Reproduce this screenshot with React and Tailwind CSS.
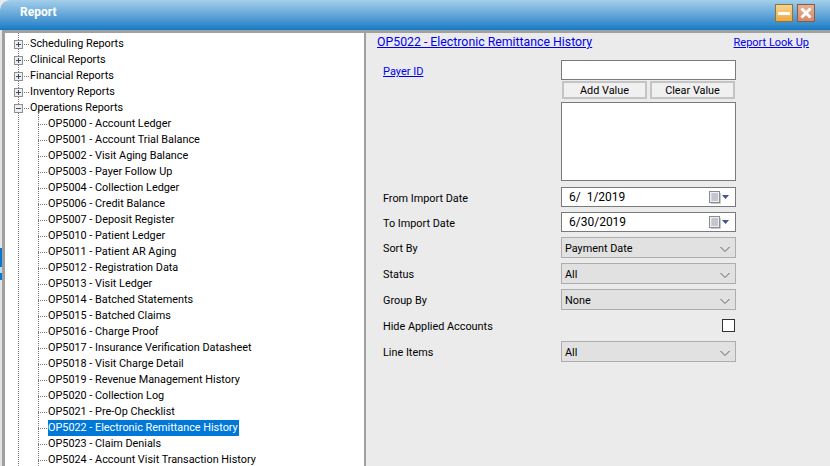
import React from "react";

const reports = [
    "OP5000 - Account Ledger",
    "OP5001 - Account Trial Balance",
    "OP5002 - Visit Aging Balance",
    "OP5003 - Payer Follow Up",
    "OP5004 - Collection Ledger",
    "OP5006 - Credit Balance",
    "OP5007 - Deposit Register",
    "OP5010 - Patient Ledger",
    "OP5011 - Patient AR Aging",
    "OP5012 - Registration Data",
    "OP5013 - Visit Ledger",
    "OP5014 - Batched Statements",
    "OP5015 - Batched Claims",
    "OP5016 - Charge Proof",
    "OP5017 - Insurance Verification Datasheet",
    "OP5018 - Visit Charge Detail",
    "OP5019 - Revenue Management History",
    "OP5020 - Collection Log",
    "OP5021 - Pre-Op Checklist",
    "OP5022 - Electronic Remittance History",
    "OP5023 - Claim Denials",
    "OP5024 - Account Visit Transaction History",
];

const Expander = ({ open }) => (
    <svg width="9" height="9" viewBox="0 0 9 9" className="shrink-0">
        <rect x="0.5" y="0.5" width="8" height="8" fill="#eeeeee" stroke="#8f8f8f" />
        <path d={open ? "M2 4.5H7" : "M2 4.5H7M4.5 2V7"} stroke="#3c4a6a" fill="none" />
    </svg>
);

const GroupRow = ({ label, open }) => (
    <div className="flex h-4 items-center pl-[14px]">
        <Expander open={open} />
        <div className="ml-[1px] w-[5px] border-t border-dotted border-[#777]" />
        <span className="ml-[1px]">{label}</span>
    </div>
);

const ReportRow = ({ label, selected }) => (
    <div className="flex h-4 items-center pl-[38px]">
        <div className="w-[9px] border-t border-dotted border-[#777]" />
        <span className={selected ? "ml-[1px] bg-[#0078d7] pr-[1px] text-white" : "ml-[1px]"}>{label}</span>
    </div>
);

const FieldRow = ({ label, className, labelClass = "mt-[2px]", children }) => (
    <div className={`flex items-center justify-between ${className}`}>
        <span className={labelClass}>{label}</span>
        {children}
    </div>
);

const Select = ({ value }) => (
    <div className="flex h-[21px] w-[175px] items-center justify-between border border-[#adadad] bg-[#e1e1e1] pl-[3px] pr-[2px] pt-[2px]">
        <span>{value}</span>
        <svg width="16" height="16" viewBox="0 0 16 16" className="shrink-0">
            <path d="M3.5 6L8 10.5L12.5 6" stroke="#606060" fill="none" />
        </svg>
    </div>
);

const DateInput = ({ value }) => (
    <div className="flex h-5 w-[175px] items-center justify-between border border-[#7a7a7a] bg-white pl-[7px] pr-[6px]">
        <span className="whitespace-pre text-[12px]">{value}</span>
        <div className="flex items-center gap-[1px]">
            <svg width="12" height="13" viewBox="0 0 12 13">
                <rect x="0.5" y="0.5" width="10" height="11" fill="#eef0f6" stroke="#8c8c8c" />
                <path d="M2 3H9M2 5H9M2 7H9M2 9H9M4 2V10M6 2V10M8 2V10" stroke="#b4b8c4" fill="none" />
                <path d="M11.5 2V12.5H2" stroke="#c8c8c8" fill="none" />
            </svg>
            <svg width="7" height="4" viewBox="0 0 7 4">
                <path d="M0 0H7L3.5 4Z" fill="#3f5688" />
            </svg>
        </div>
    </div>
);

const WinButton = ({ label }) => (
    <div className="flex h-[18px] w-[85px] items-center justify-center border-2 border-[#c4c4c4] bg-[#f0f0f0] pt-[2px]">{label}</div>
);

export default function App() {
    return (
        <div className="flex h-[466px] w-[830px] flex-col overflow-hidden bg-[#ebebeb] text-[10.85px] leading-4 text-black font-['Roboto',sans-serif]">
            {/* Title bar */}
            <div className="flex h-[30px] shrink-0 items-start justify-between rounded-tl-[10px] bg-gradient-to-b from-[#a3cfea] to-[#0a7bc4] pl-5 pr-[15px] pt-[4px]">
                <span className="text-[12px] font-bold text-white">Report</span>
                <div className="flex gap-[4px]">
                    <div className="flex h-[18px] w-[18px] items-center justify-center border border-[#8a7448] bg-gradient-to-b from-[#f6d58c] to-[#eda93c]">
                        <div className="h-[3px] w-[12px] bg-white" />
                    </div>
                    <div className="flex h-[18px] w-[18px] items-center justify-center border border-[#7d5f50] bg-gradient-to-b from-[#e8b090] to-[#d58a68]">
                        <svg width="14" height="14" viewBox="0 0 14 14">
                            <path d="M2.5 2.5L11.5 11.5M11.5 2.5L2.5 11.5" stroke="#fff" strokeWidth="3" />
                        </svg>
                    </div>
                </div>
            </div>

            <div className="flex min-h-0 flex-1">
                {/* Sliver of the window behind */}
                <div className="w-[2px] shrink-0 bg-[#e4e4e4] pt-[218px]">
                    <div className="h-[19px] bg-[#0a78d0]" />
                    <div className="h-[6px] bg-[#c8d8e8]" />
                    <div className="h-[7px] bg-[#0a78d0]" />
                </div>

                <div className="flex min-w-0 flex-1 border-t-[3px] border-[#a0a0a0]">
                    {/* Report tree */}
                    <div className="relative w-[364px] shrink-0 overflow-hidden border-l-[3px] border-r-[2px] border-[#a0a0a0] bg-white pt-[3px]">
                        <div className="absolute bottom-0 left-[13px] top-0 border-l border-dotted border-[#777]" />
                        <div className="absolute bottom-0 left-[33px] top-[75px] border-l border-dotted border-[#777]" />
                        <div className="relative -ml-[5px]">
                            <GroupRow label="Scheduling Reports" />
                            <GroupRow label="Clinical Reports" />
                            <GroupRow label="Financial Reports" />
                            <GroupRow label="Inventory Reports" />
                            <GroupRow label="Operations Reports" open />
                            {reports.map((r) => (
                                <ReportRow key={r} label={r} selected={r.startsWith("OP5022")} />
                            ))}
                        </div>
                    </div>

                    {/* Report parameters */}
                    <div className="min-w-0 flex-1 pl-[11px] pr-[21px]">
                        <div className="flex h-4 items-start justify-between pt-[1px] text-[#0000ee]">
                            <span className="text-[12.3px] underline">OP5022 - Electronic Remittance History</span>
                            <span className="mt-[1px] text-[11px] underline">Report Look Up</span>
                        </div>
                        <div className="mt-[11px] w-[359px] pl-[6px]">
                            <div className="flex items-start justify-between">
                                <span className="mt-[4px] text-[11px] text-[#0000ee] underline">Payer ID</span>
                                <div className="flex w-[175px] flex-col">
                                    <div className="h-5 border border-[#7a7a7a] bg-white" />
                                    <div className="mt-[1px] flex justify-between px-[1px]">
                                        <WinButton label="Add Value" />
                                        <WinButton label="Clear Value" />
                                    </div>
                                    <div className="mt-[3px] h-[79px] border border-[#7a7a7a] bg-white" />
                                </div>
                            </div>
                            <FieldRow label="From Import Date" labelClass="mt-[4px]" className="mt-[6px]"><DateInput value="6/  1/2019" /></FieldRow>
                            <FieldRow label="To Import Date" labelClass="mt-[4px]" className="mt-[5px]"><DateInput value="6/30/2019" /></FieldRow>
                            <FieldRow label="Sort By" className="mt-[5px]"><Select value="Payment Date" /></FieldRow>
                            <FieldRow label="Status" className="mt-[5px]"><Select value="All" /></FieldRow>
                            <FieldRow label="Group By" className="mt-[5px]"><Select value="None" /></FieldRow>
                            <FieldRow label="Hide Applied Accounts" className="mt-[5px] h-[21px]">
                                <div className="mr-[1px] h-[13px] w-[13px] border border-[#333] bg-white" />
                            </FieldRow>
                            <FieldRow label="Line Items" className="mt-[5px]"><Select value="All" /></FieldRow>
                        </div>
                    </div>
                </div>
            </div>
        </div>
    );
}
